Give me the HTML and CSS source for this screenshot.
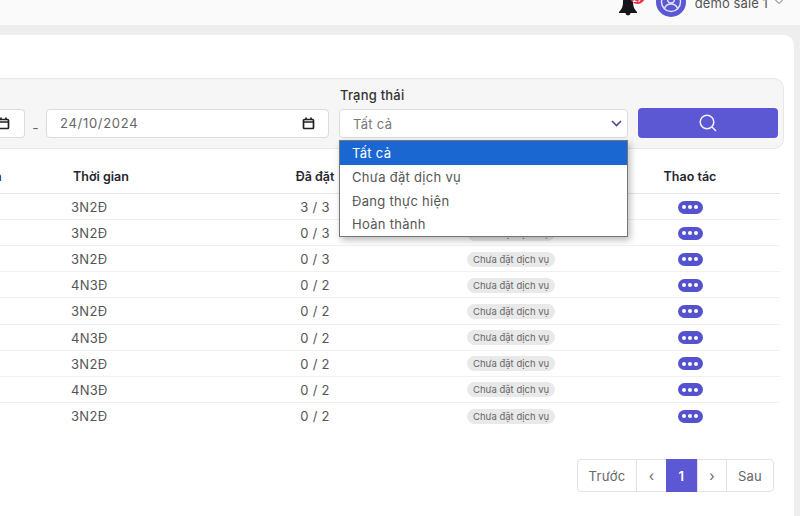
FILE: index.html
```html
<!DOCTYPE html>
<html lang="vi">
<head>
<meta charset="utf-8">
<title>Dịch vụ</title>
<link rel="stylesheet" href="styles.css">
</head>
<body>
<header class="topbar">
  <div class="bell">
    <svg width="18" height="22" viewBox="0 0 18 22"><path d="M8 0C5 1 4 4 4 8c0 4-1 7-4 10v1h6.500a2.500 2.500 0 0 0 5 0H18v-1c-3-3-4-6-4-10 0-4-2-7-4-8z" fill="#16161a"/></svg>
    <span class="badge">27</span>
  </div>
  <div class="avatar">
    <svg width="22" height="22" viewBox="0 0 22 22" fill="none" stroke="#e6e6f8" stroke-width="1.400"><circle cx="11" cy="11" r="9.500"/><circle cx="11" cy="8.500" r="3.500"/><path d="M4.500 17.500c1-3 3.500-4.500 6.500-4.500s5.500 1.500 6.500 4.500"/></svg>
  </div>
  <span class="username">demo sale 1</span>
  <svg class="user-caret" width="10" height="6" viewBox="0 0 10 6" fill="none" stroke="#666" stroke-width="1"><path d="M1 .5l4 4 4-4"/></svg>
</header>
<main class="content">
  <section class="card">
    <div class="filters">
      <div class="field field-from">
        <div class="input input-from">
          <svg class="cal" width="13" height="13" viewBox="0 0 13 13" fill="none" stroke="#222" stroke-width="1.700"><rect x="1.500" y="2.500" width="10" height="9" rx="1"/><path d="M1.500 5h10M4 .5v2M9 .5v2"/></svg>
        </div>
      </div>
      <span class="dash">-</span>
      <div class="field field-to">
        <div class="input">
          <span class="date-text">24/10/2024</span>
          <svg class="cal" width="13" height="13" viewBox="0 0 13 13" fill="none" stroke="#222" stroke-width="1.700"><rect x="1.500" y="2.500" width="10" height="9" rx="1"/><path d="M1.500 5h10M4 .5v2M9 .5v2"/></svg>
        </div>
      </div>
      <div class="field field-status">
        <label class="label">Trạng thái</label>
        <div class="input select">
          <span class="select-text">Tất cả</span>
          <svg width="11" height="7" viewBox="0 0 11 7" fill="none" stroke="#4a4a8c" stroke-width="1.600"><path d="M1 1l4.500 4.500L10 1"/></svg>
        </div>
        <ul class="menu">
          <li class="menu-item active">Tất cả</li>
          <li class="menu-item">Chưa đặt dịch vụ</li>
          <li class="menu-item">Đang thực hiện</li>
          <li class="menu-item">Hoàn thành</li>
        </ul>
      </div>
      <button class="search" type="button" aria-label="Tìm kiếm">
        <svg width="18" height="18" viewBox="0 0 18 18" fill="none" stroke="#f4f4ff" stroke-width="1.500"><circle cx="8" cy="8" r="6.800"/><path d="M13 13l4 4"/></svg>
      </button>
    </div>

    <div class="table">
      <div class="row head">
        <div class="c0">n</div><div class="c1">Thời gian</div><div class="c2">Đã đặt</div><div class="c3"></div><div class="c4">Thao tác</div>
      </div>
      <div class="row"><div class="c0"></div><div class="c1">3N2Đ</div><div class="c2">3 / 3</div><div class="c3"><span class="pill">Chưa đặt dịch vụ</span></div><div class="c4"><span class="more"><i></i><i></i><i></i></span></div></div>
      <div class="row"><div class="c0"></div><div class="c1">3N2Đ</div><div class="c2">0 / 3</div><div class="c3"><span class="pill">Chưa đặt dịch vụ</span></div><div class="c4"><span class="more"><i></i><i></i><i></i></span></div></div>
      <div class="row"><div class="c0"></div><div class="c1">3N2Đ</div><div class="c2">0 / 3</div><div class="c3"><span class="pill">Chưa đặt dịch vụ</span></div><div class="c4"><span class="more"><i></i><i></i><i></i></span></div></div>
      <div class="row"><div class="c0"></div><div class="c1">4N3Đ</div><div class="c2">0 / 2</div><div class="c3"><span class="pill">Chưa đặt dịch vụ</span></div><div class="c4"><span class="more"><i></i><i></i><i></i></span></div></div>
      <div class="row"><div class="c0"></div><div class="c1">3N2Đ</div><div class="c2">0 / 2</div><div class="c3"><span class="pill">Chưa đặt dịch vụ</span></div><div class="c4"><span class="more"><i></i><i></i><i></i></span></div></div>
      <div class="row"><div class="c0"></div><div class="c1">4N3Đ</div><div class="c2">0 / 2</div><div class="c3"><span class="pill">Chưa đặt dịch vụ</span></div><div class="c4"><span class="more"><i></i><i></i><i></i></span></div></div>
      <div class="row"><div class="c0"></div><div class="c1">3N2Đ</div><div class="c2">0 / 2</div><div class="c3"><span class="pill">Chưa đặt dịch vụ</span></div><div class="c4"><span class="more"><i></i><i></i><i></i></span></div></div>
      <div class="row"><div class="c0"></div><div class="c1">4N3Đ</div><div class="c2">0 / 2</div><div class="c3"><span class="pill">Chưa đặt dịch vụ</span></div><div class="c4"><span class="more"><i></i><i></i><i></i></span></div></div>
      <div class="row last"><div class="c0"></div><div class="c1">3N2Đ</div><div class="c2">0 / 2</div><div class="c3"><span class="pill">Chưa đặt dịch vụ</span></div><div class="c4"><span class="more"><i></i><i></i><i></i></span></div></div>
    </div>

    <nav class="pager">
      <span class="page page-text">Trước</span>
      <span class="page page-arrow">‹</span>
      <span class="page page-num current">1</span>
      <span class="page page-arrow page-next">›</span>
      <span class="page page-text page-last">Sau</span>
    </nav>
  </section>
</main>
</body>
</html>
```

FILE: styles.css
```css
* { box-sizing: border-box; }
html, body { margin: 0; height: 516px; overflow: hidden; }
body {
  background: #eeeeee;
  font-family: Inter, "Noto Sans", sans-serif;
  font-size: 13px;
  color: #555;
  display: flex;
  flex-direction: column;
}
.topbar {
  height: 25px;
  flex: none;
  background: #fafafa;
  display: flex;
  align-items: flex-end;
  justify-content: flex-end;
  padding: 0 16px 8px 0;
}
.bell { position: relative; width: 18px; height: 17px; margin-right: 19px; flex: none; }
.bell svg { position: absolute; left: 0; bottom: 1px; }
.badge {
  position: absolute;
  left: 11px;
  top: -11px;
  width: 15px;
  height: 15px;
  border-radius: 50%;
  background: #e8304d;
  color: #fff;
  font-size: 8px;
  font-weight: 600;
  line-height: 21px;
  text-align: center;
  overflow: hidden;
}
.avatar {
  width: 30px;
  height: 30px;
  border-radius: 50%;
  background: #5c58d4;
  display: flex;
  align-items: center;
  justify-content: center;
  margin: 0 9px 0 0;
  flex: none;
}
.username {
  font-size: 13px;
  line-height: 16px;
  letter-spacing: .1px;
  color: #555;
  margin-bottom: 6px;
  white-space: nowrap;
}
.user-caret { margin: 0 0 12px 6px; flex: none; }

.content { flex: 1; padding: 10px 6px 0 0; min-height: 0; }
.card {
  background: #fff;
  height: 100%;
  border-radius: 0 10px 0 0;
  padding-top: 43px;
  position: relative;
}
.filters {
  height: 71px;
  margin-right: 10px;
  background: #f6f6f6;
  border: 1px solid #e8e8e8;
  border-left: 0;
  border-radius: 0 10px 10px 0;
  display: flex;
  align-items: flex-start;
  padding-top: 30px;
}
.field { position: relative; flex: none; }
.field-from { width: 25px; }
.field-to { width: 283px; margin-right: 10px; }
.field-status { width: 289px; margin-right: 10px; }
.dash { width: 21px; text-align: center; font-size: 14px; line-height: 30px; padding-top: 4px; color: #666; flex: none; }
.input {
  height: 29px;
  background: #fff;
  border: 1px solid #dcdcdc;
  border-radius: 4px;
  display: flex;
  align-items: center;
  justify-content: space-between;
}
.input-from { border-left: 0; border-radius: 0 4px 4px 0; justify-content: flex-end; padding-right: 14px; }
.field-to .input { padding: 0 13px 0 13px; }
.date-text { font-size: 13px; letter-spacing: .7px; color: #666; padding-bottom: 2px; }
.cal { flex: none; margin-bottom: 1px; }
.label {
  position: absolute;
  left: 1px;
  top: -22px;
  font-size: 13px;
  font-weight: 500;
  letter-spacing: .2px;
  line-height: 16px;
  color: #333;
  white-space: nowrap;
}
.select { padding: 0 5px 0 13px; }
.select-text { color: #777; letter-spacing: .3px; }
.menu {
  position: absolute;
  left: 0;
  top: 31px;
  width: 289px;
  margin: 0;
  padding: 0;
  list-style: none;
  background: #fff;
  border: 1px solid #767676;
  box-shadow: 2px 3px 7px rgba(0,0,0,.28);
  z-index: 5;
}
.menu-item { height: 23.750px; line-height: 24px; padding: 0 12px; color: #555; letter-spacing: .3px; }
.menu-item.active { background: #1a67d2; color: #fff; }
.search {
  width: 140px;
  height: 30px;
  margin-top: -1px;
  background: #5c58d4;
  border: 0;
  border-radius: 4px;
  display: flex;
  align-items: center;
  justify-content: center;
  padding: 0;
  flex: none;
}

.table { margin-top: 13px; margin-right: 14px; }
.row {
  display: grid;
  grid-template-columns: 70px 190px 110px 230px 1fr;
  height: 26.120px;
  align-items: center;
  border-bottom: 1px solid #f1f1f1;
  padding-top: 1px;
}
.row.last { border-bottom: 0; }
.head {
  height: 32px;
  border-bottom: 1px solid #e6e6e6;
  font-weight: 600;
  color: #26262e;
  font-size: 12.500px;
  padding: 0 0 3px;
}
.c0 { overflow: hidden; text-indent: -6px; }
.c1 { padding-left: 1px; letter-spacing: .3px; }
.head .c1 { padding-left: 3px; letter-spacing: 0; }
.c2 { text-align: center; letter-spacing: .3px; }
.head .c2 { letter-spacing: 0; }
.c3 { padding-left: 97px; display: flex; }
.c4 { display: flex; justify-content: center; }
.pill {
  height: 15px;
  padding: 0 6px;
  border-radius: 8px;
  background: #e9e9e9;
  color: #666;
  font-size: 9.500px;
  line-height: 15px;
  white-space: nowrap;
}
.more {
  width: 25px;
  height: 13px;
  border-radius: 7px;
  background: #5552cf;
  display: flex;
  align-items: center;
  justify-content: center;
  gap: 2px;
}
.more i { width: 4px; height: 4px; border-radius: 50%; background: #fff; }

.pager {
  position: absolute;
  right: 20px;
  top: 424px;
  display: flex;
  height: 33px;
  background: #fff;
  border: 1px solid #e2e2e2;
  border-radius: 4px;
}
.page {
  display: flex;
  align-items: center;
  justify-content: center;
  border-left: 1px solid #e2e2e2;
  color: #666;
  letter-spacing: .3px;
}
.page:first-child { border-left: 0; }
.page-text { width: 58px; }
.page-last { width: 47px; }
.page-arrow { width: 30px; font-size: 14px; }
.page-next { width: 29px; }
.page-num { width: 31px; }
.current {
  background: #5c58d4;
  color: #fff;
  font-weight: 600;
  border-left: 0;
  margin: -1px 0;
}
```
